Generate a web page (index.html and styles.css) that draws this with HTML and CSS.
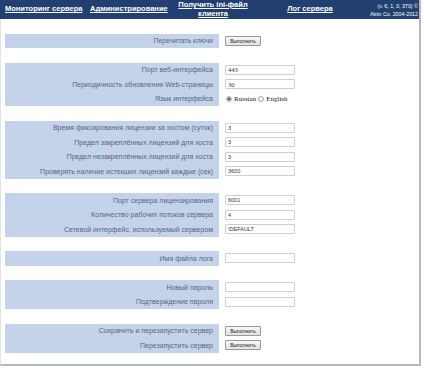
FILE: index.html
```html
<!DOCTYPE html>
<html lang="ru">
<head>
    <meta charset="UTF-8">
    <title>Администрирование</title>
    <link rel="stylesheet" href="styles.css">
</head>
<body>
    <div class="page">
        <div class="header">
            <div class="nav nav-left"><a href="#">Мониторинг сервера</a></div>
            <div class="nav nav-left"><a href="#">Администрирование</a></div>
            <div class="nav"><a href="#">Получить ini-файл клиента</a></div>
            <div class="nav"><a href="#">Лог сервера</a></div>
            <div class="version">(v. 6, 1, 0, 370) ©<br>Aktiv Co. 2004-2012</div>
        </div>

        <div class="content">
            <div class="section">
                <div class="label">Перечитать ключи</div>
                <div class="value"><button class="btn">Выполнить</button></div>
            </div>

            <div class="section">
                <div class="label">Порт веб-интерфейса</div>
                <div class="value"><input class="field serif" type="text" value="443"></div>
                <div class="label">Периодичность обновления Web-страницы</div>
                <div class="value"><input class="field serif" type="text" value="30"></div>
                <div class="label">Язык интерфейса</div>
                <div class="value lang">
                    <span class="radio checked"></span>Russian
                    <span class="radio second"></span>English
                </div>
            </div>

            <div class="section">
                <div class="label">Время фиксирования лицензии за хостом (суток)</div>
                <div class="value"><input class="field" type="text" value="3"></div>
                <div class="label">Предел закреплённых лицензий для хоста</div>
                <div class="value"><input class="field" type="text" value="3"></div>
                <div class="label">Предел незакреплённых лицензий для хоста</div>
                <div class="value"><input class="field" type="text" value="3"></div>
                <div class="label">Проверять наличие истекших лицензий каждые (сек)</div>
                <div class="value"><input class="field" type="text" value="3600"></div>
            </div>

            <div class="section">
                <div class="label">Порт сервера лицензирования</div>
                <div class="value"><input class="field" type="text" value="6001"></div>
                <div class="label">Количество рабочих потоков сервера</div>
                <div class="value"><input class="field" type="text" value="4"></div>
                <div class="label">Сетевой интерфейс, используемый сервером</div>
                <div class="value"><input class="field" type="text" value="!DEFAULT"></div>
            </div>

            <div class="section">
                <div class="label">Имя файла лога</div>
                <div class="value"><input class="field" type="text" value=""></div>
            </div>

            <div class="section">
                <div class="label">Новый пароль</div>
                <div class="value"><input class="field" type="password" value=""></div>
                <div class="label">Подтверждение пароля</div>
                <div class="value"><input class="field" type="password" value=""></div>
            </div>

            <div class="section">
                <div class="label">Сохранить и перезапустить сервер</div>
                <div class="value"><button class="btn">Выполнить</button></div>
                <div class="label">Перезапустить сервер</div>
                <div class="value"><button class="btn">Выполнить</button></div>
            </div>
        </div>
    </div>
</body>
</html>
```

FILE: styles.css
```css
body {
    margin: 0;
    background: #fff;
    font-family: 'Liberation Sans', Arial, sans-serif;
}

.page {
    width: 421px;
    height: 366px;
    box-sizing: border-box;
    border-left: 1px solid #e2e2e2;
    border-right: 2px solid #b8b8b8;
    border-bottom: 2px solid #b8b8b8;
}

.header {
    display: grid;
    grid-template-columns: 85px 87px 82px 112px 1fr;
    align-items: center;
    height: 19px;
    margin-left: -1px;
    background: #213f70;
    color: white;
}

.nav {
    text-align: center;
    font-size: 7.5px;
    font-weight: bold;
    line-height: 8.5px;
}

.nav-left {
    text-align: left;
    padding-left: 5px;
}

.nav a {
    color: white;
}

.version {
    text-align: right;
    white-space: nowrap;
    font-size: 5.3px;
    line-height: 8px;
    padding-right: 1px;
}

.content {
    padding-left: 4px;
}

.section {
    display: grid;
    grid-template-columns: 214px 1fr;
    grid-auto-rows: 14.5px;
    margin-top: 14.5px;
}

.label {
    display: flex;
    align-items: center;
    justify-content: flex-end;
    padding-right: 6px;
    background: #c5d3ea;
    color: #56667f;
    font-size: 7px;
    white-space: nowrap;
}

.value {
    display: flex;
    align-items: center;
    padding-left: 6px;
}

.field {
    width: 70px;
    height: 10px;
    box-sizing: border-box;
    margin: 0;
    padding: 0 2px;
    border: 1px solid #cfcfcf;
    border-radius: 1px;
    font-family: 'Liberation Sans', Arial, sans-serif;
    font-size: 5.5px;
    color: #333;
}

.field.serif {
    font-family: 'Liberation Serif', 'Times New Roman', serif;
    font-size: 6.5px;
}

.btn {
    height: 10px;
    width: 36px;
    margin: 0;
    padding: 0;
    border: 1px solid #999;
    border-radius: 1px;
    background: linear-gradient(#f6f6f6, #e2e2e2);
    font-family: 'Liberation Sans', Arial, sans-serif;
    font-size: 5px;
    color: #222;
}

.lang {
    font-family: 'Liberation Serif', 'Times New Roman', serif;
    font-size: 7px;
    color: #222;
    padding-left: 7px;
    white-space: nowrap;
}

.radio {
    display: inline-block;
    width: 4px;
    height: 4px;
    margin-right: 2px;
    border: 1px solid #aaa;
    border-radius: 50%;
    background: #f4f4f4;
}

.radio.second {
    margin-left: 2px;
}

.radio.checked {
    background: radial-gradient(circle, #3a4f6e 40%, #d8dde4 60%);
}
```
